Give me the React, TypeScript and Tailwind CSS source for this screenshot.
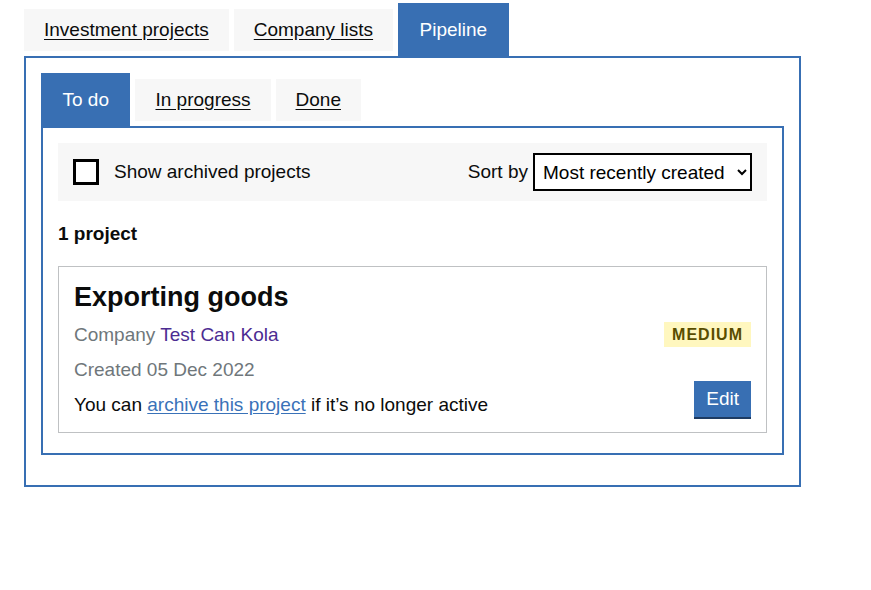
import React, { useState } from 'react';

type TabProps = {
  label: string;
  active: boolean;
  onClick: () => void;
};

const Tab: React.FC<TabProps> = ({ label, active, onClick }) =>
  active ? (
    <button
      onClick={onClick}
      className="h-[53px] px-[21.5px] bg-[#386fb3] text-white text-[19px] leading-none"
    >
      {label}
    </button>
  ) : (
    <button
      onClick={onClick}
      className="mt-[6px] h-[42px] px-[20px] pb-[2px] bg-[#f7f7f7] text-[#0b0c0c] text-[19px] leading-none underline underline-offset-[3px]"
    >
      {label}
    </button>
  );

const ProjectCard: React.FC = () => (
  <div className="flex border border-[#bfc1c3] px-[15px] pt-[15px] pb-[15px]">
    <div className="flex-1 flex flex-col">
      <h3 className="text-[27px] leading-[30px] font-bold text-[#0b0c0c]">Exporting goods</h3>
      <p className="mt-[10px] leading-[25px] text-[#6f777b]">
        Company <a href="#" className="text-[#4c2c92]">Test Can Kola</a>
      </p>
      <p className="mt-[10px] leading-[25px] text-[#6f777b]">Created 05 Dec 2022</p>
      <p className="mt-[10px] leading-[25px] text-[#0b0c0c]">
        You can{' '}
        <a href="#" className="text-[#3a72b8] underline underline-offset-[2px]">
          archive this project
        </a>{' '}
        if it’s no longer active
      </p>
    </div>
    <div className="flex flex-col items-end justify-between pt-[40px]">
      <span className="h-[25px] px-[8px] flex items-center bg-[#fff7bf] text-[#594d00] text-[16px] font-bold tracking-[1px] leading-none">
        MEDIUM
      </span>
      <button className="h-[36px] px-[12px] pb-[2px] bg-[#386fb3] text-white text-[19px] leading-none shadow-[0_2px_0_#1d3b63]">
        Edit
      </button>
    </div>
  </div>
);

export default function App() {
  const [topTab, setTopTab] = useState('Pipeline');
  const [subTab, setSubTab] = useState('To do');
  const [archived, setArchived] = useState(false);

  return (
    <div
      className="pt-[3px] pl-[24px] text-[19px] text-[#0b0c0c]"
      style={{ fontFamily: '"Liberation Sans", Arial, sans-serif' }}
    >
      <div className="w-[777px]">
        <div className="flex items-start gap-[5px]">
          {['Investment projects', 'Company lists', 'Pipeline'].map((t) => (
            <Tab key={t} label={t} active={topTab === t} onClick={() => setTopTab(t)} />
          ))}
        </div>
        <div className="border-2 border-[#386fb3] pt-[15px] px-[15px] pb-[30px]">
          <div className="flex items-start gap-[5px]">
            {['To do', 'In progress', 'Done'].map((t) => (
              <Tab key={t} label={t} active={subTab === t} onClick={() => setSubTab(t)} />
            ))}
          </div>
          <div className="border-2 border-[#386fb3] px-[15px] pt-[15px] pb-[20px]">
            <div className="h-[58px] bg-[#f7f7f7] px-[15px] flex items-center justify-between">
              <label className="flex items-center gap-[15px] cursor-pointer">
                <input
                  type="checkbox"
                  checked={archived}
                  onChange={() => setArchived(!archived)}
                  className="appearance-none w-[26px] h-[26px] border-[3px] border-black bg-white"
                />
                <span>Show archived projects</span>
              </label>
              <div className="flex items-center gap-[5px]">
                <span>Sort by</span>
                <select className="w-[219px] h-[38px] border-2 border-black bg-white pl-[4px] pr-[4px] text-[19px] text-black">
                  <option>Most recently created</option>
                  <option>Project name</option>
                  <option>Earliest expected end date</option>
                </select>
              </div>
            </div>
            <p className="mt-[20px] leading-[25px] font-bold">1 project</p>
            <div className="mt-[20px]">
              <ProjectCard />
            </div>
          </div>
        </div>
      </div>
    </div>
  );
}
